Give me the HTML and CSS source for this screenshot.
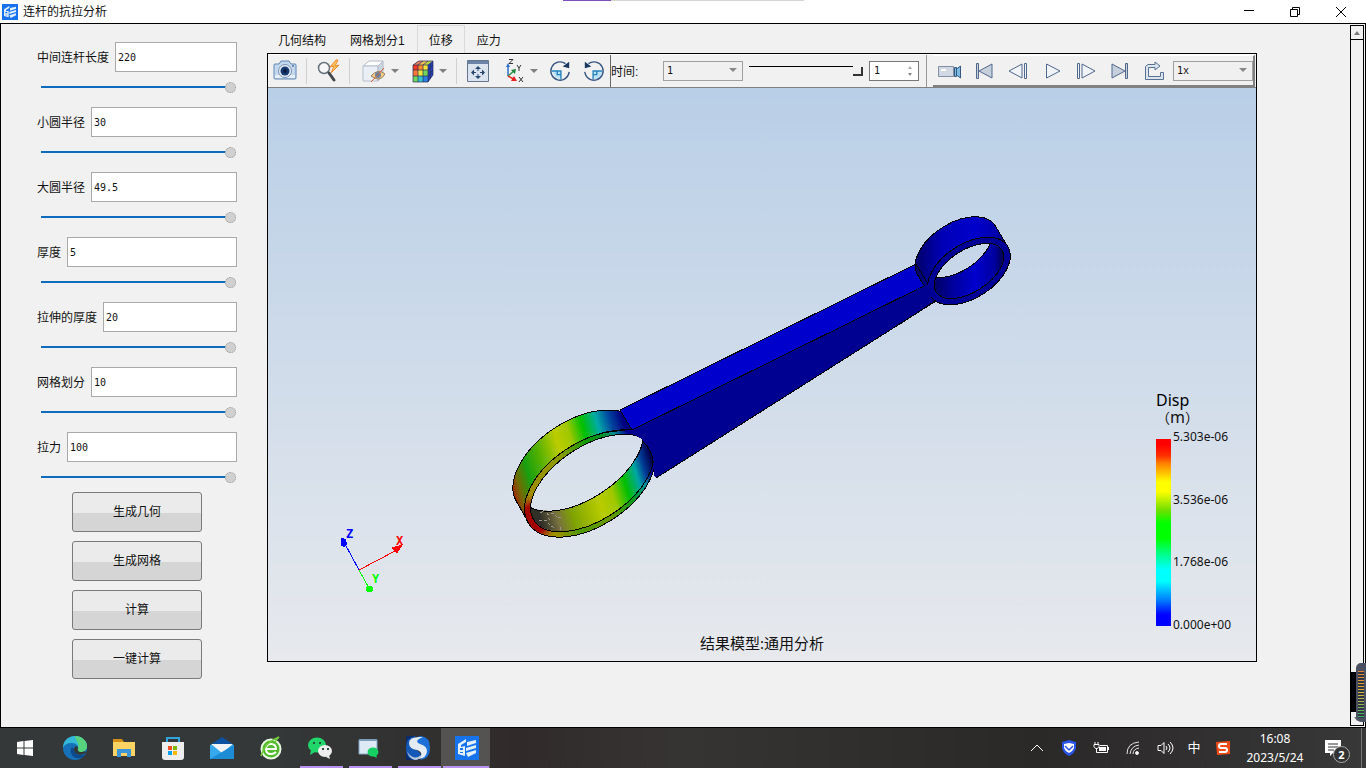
FILE: index.html
```html
<!DOCTYPE html>
<html lang="zh-CN">
<head>
<meta charset="utf-8">
<title>连杆的抗拉分析</title>
<link rel="stylesheet" href="styles.css">
</head>
<body>
<header class="titlebar">
  <svg class="app-icon" viewBox="0 0 24 24"><use href="#logo"/></svg>
  <h1 class="title">连杆的抗拉分析</h1>
  <div class="top-strip"></div>
  <div class="window-buttons">
    <button aria-label="最小化"><svg width="12" height="12" viewBox="0 0 12 12"><path d="M1 4.500h10" stroke="#000"/></svg></button>
    <button aria-label="还原"><svg width="12" height="12" viewBox="0 0 12 12" fill="none" stroke="#000"><path d="M1.500 3.500h7v7h-7zM3.500 3.500v-2h7v7h-2"/></svg></button>
    <button aria-label="关闭"><svg width="12" height="12" viewBox="0 0 12 12"><path d="M1 1l10 10M11 1L1 11" stroke="#000"/></svg></button>
  </div>
</header>

<main class="workspace">
  <form class="params">
    <div class="field"><div class="row"><label for="p1">中间连杆长度</label><input class="value" id="p1" value="220"></div><input class="range" type="range" value="100" aria-label="中间连杆长度"></div>
    <div class="field"><div class="row"><label for="p2">小圆半径</label><input class="value" id="p2" value="30"></div><input class="range" type="range" value="100" aria-label="小圆半径"></div>
    <div class="field"><div class="row"><label for="p3">大圆半径</label><input class="value" id="p3" value="49.5"></div><input class="range" type="range" value="100" aria-label="大圆半径"></div>
    <div class="field"><div class="row"><label for="p4">厚度</label><input class="value" id="p4" value="5"></div><input class="range" type="range" value="100" aria-label="厚度"></div>
    <div class="field"><div class="row"><label for="p5">拉伸的厚度</label><input class="value" id="p5" value="20"></div><input class="range" type="range" value="100" aria-label="拉伸的厚度"></div>
    <div class="field"><div class="row"><label for="p6">网格划分</label><input class="value" id="p6" value="10"></div><input class="range" type="range" value="100" aria-label="网格划分"></div>
    <div class="field"><div class="row"><label for="p7">拉力</label><input class="value" id="p7" value="100"></div><input class="range" type="range" value="100" aria-label="拉力"></div>
    <div class="actions">
      <button type="button">生成几何</button>
      <button type="button">生成网格</button>
      <button type="button">计算</button>
      <button type="button">一键计算</button>
    </div>
  </form>

  <section class="viewer">
    <nav class="tabs">
      <button>几何结构</button><button>网格划分1</button><button class="selected">位移</button><button>应力</button>
    </nav>
    <div class="frame">
      <div class="toolbar">
        <div class="tools">
          <button class="tool" aria-label="截图"><svg width="24" height="24" viewBox="0 0 24 24"><path d="M2 5h4l2-3h8l2 3h4q1 0 1 1v13q0 1-1 1H2q-1 0-1-1V6q0-1 1-1z" fill="#c3d8ee" stroke="#5f86b4"/><path d="M2 16h20v3H2z" fill="#e6eff8"/><circle cx="12" cy="12" r="6.500" fill="#e4edf7" stroke="#7b93b2"/><circle cx="12" cy="12" r="4.500" fill="#173a70"/><circle cx="12" cy="12" r="2" fill="#0a1d42"/><path d="M19 7h2" stroke="#23416f"/></svg></button>
          <i class="sep"></i>
          <button class="tool" aria-label="查询"><svg width="26" height="24" viewBox="0 0 26 24"><circle cx="9" cy="9" r="5.500" fill="#f7f7f7" stroke="#68717a" stroke-width="1.500"/><path d="M14 14l5 7" stroke="#44484c" stroke-width="3" stroke-linecap="round"/><path d="M21 1l-6 7 4-1-3 7 8-8-4 1 3-6z" fill="#ffc860" stroke="#f0882e"/></svg></button>
          <i class="sep"></i>
          <button class="tool end" aria-label="显示隐藏"><svg width="26" height="24" viewBox="0 0 24 24"><path d="M1 7l6-5h14l-5 5z" fill="#fff" stroke="#b4bcc8"/><path d="M1 7h15v15H1z" fill="#eaeff5" stroke="#b8c0cc"/><path d="M16 7l5-5v14l-5 6z" fill="#cdd5e0" stroke="#b4bcc8"/><path d="M9 17q7-8 14-2-5 9-14 2z" fill="#f6d088" stroke="#98805c"/><circle cx="16" cy="16" r="3" fill="#6c80a0"/><path d="M9 23L22 9" stroke="#d06038"/></svg></button><button class="caret" aria-label="更多显示"></button>
          <button class="tool end" aria-label="云图"><svg width="24" height="24" viewBox="0 0 24 24"><path d="M2 6l6-4h14l-5 4z" fill="#b8d848"/><path d="M7 2h5l-4 4H2z" fill="#e88060"/><path d="M12 2h5l-4 4H8z" fill="#f3c454"/><path d="M2 6h5v5H2z" fill="#f03920"/><path d="M7 6h5v5H7z" fill="#f88c28"/><path d="M12 6h5v5h-5z" fill="#f9e43a"/><path d="M2 11h5v6H2z" fill="#ff7838"/><path d="M7 11h5v6H7z" fill="#f0e339"/><path d="M12 11h5v6h-5zM2 17h5v6H2z" fill="#71d65b"/><path d="M7 17h5v6H7z" fill="#36c4ce"/><path d="M12 17h5v6h-5z" fill="#2c80e0"/><path d="M17 6l5-4v14l-5 7z" fill="#2440b8"/><path d="M2 6h15v17H2zM7 6v17M12 6v17M2 11h15l5-5M2 17h15l5-6M17 6l5-4v14l-5 7M2 6l6-4h14M7 6l5-4M12 6l5-4M19.500 4v15" fill="none" stroke="#282f5a" stroke-width=".7"/></svg></button><button class="caret" aria-label="更多云图"></button>
          <i class="sep"></i>
          <button class="tool" aria-label="适应窗口"><svg width="24" height="24" viewBox="0 0 24 24"><path d="M1.500 1.500h21v21h-21z" fill="#dbe4ee" stroke="#64758e"/><path d="M2 2h20v3H2z" fill="#6c83a6"/><path d="M12 7l3 3H9zM12 20l3-3H9zM5 13.500l3-3v6zM19 13.500l-3-3v6z" fill="#29466f"/><path d="M12 9v3M12 15v3M7 13.500h3M14 13.500h3" stroke="#29466f"/></svg></button>
          <button class="tool end" aria-label="视角"><svg width="24" height="24" viewBox="0 0 24 24" fill="none"><path d="M6 17V8" stroke="#2872c8" stroke-width="1.500"/><path d="M4 8l2-4 2 4z" fill="#2872c8"/><path d="M6 17l6-5" stroke="#32934b" stroke-width="1.500"/><path d="M14 10l-1 5-4-4z" fill="#188838"/><path d="M6 17l7 4" stroke="#e03020" stroke-width="1.500"/><path d="M15 22h-6l3-5z" fill="#e82020"/><path d="M7 .5h4l-4 4h4M15 6l2 3 2-3M17 9v3M17 18l4 5M21 18l-4 5" stroke="#333"/></svg></button><button class="caret" aria-label="更多视角"></button>
          <button class="tool rotate" aria-label="顺时针旋转"><svg width="22" height="22" viewBox="0 0 24 24"><path d="M4 12h9v8q-7 1-9-8z" fill="#b9e3f6"/><path d="M3 12h10v9M9 12v4h4" fill="none" stroke="#2583bd" stroke-width="1.500"/><path d="M18 4A10 10 0 1 0 22 13" fill="none" stroke="#365580" stroke-width="1.500"/><path d="M15 7l7-5v7z" fill="#183861"/></svg></button>
          <button class="tool rotate" aria-label="逆时针旋转"><svg width="22" height="22" viewBox="0 0 24 24"><path d="M12 12h9q-1 9-9 9z" fill="#b9e3f6"/><path d="M21 12h-10v9M15 12v4h-4" fill="none" stroke="#2583bd" stroke-width="1.500"/><path d="M6 4A10 10 0 1 1 2 13" fill="none" stroke="#365580" stroke-width="1.500"/><path d="M9 7L2 2v7z" fill="#183861"/></svg></button>
        </div>
        <div class="time">
          <label for="step">时间:</label>
          <span class="combo"><select id="step"><option>1</option></select></span>
          <input class="time-range" type="range" value="100" aria-label="时间">
          <span class="spin"><input type="text" value="1" aria-label="帧"><span class="spin-arrows"></span></span>
        </div>
        <div class="player">
          <button aria-label="录制"><svg width="24" height="20" viewBox="0 0 24 20"><path d="M.5 5.500h15v10H.5z" fill="#d0d8e4" stroke="#8390a3"/><path d="M3 8h5v2H3z" fill="#fff"/><path d="M16.500 6.500h2v9h-2zM18.500 8l4-3v12l-4-3z" fill="#7bbbe5" stroke="#34587f"/></svg></button>
          <button aria-label="首帧"><svg width="20" height="20" viewBox="0 0 20 20" fill="#c6cfdb" stroke="#51688f"><path d="M2.500 2.500h2v15h-2zM18 3v14L5 10z"/></svg></button>
          <button aria-label="上一帧"><svg width="20" height="20" viewBox="0 0 20 20" fill="#f0f4f9" stroke="#51688f"><path d="M14 3v14L1 10zM16.500 2.500h2v15h-2z"/></svg></button>
          <button aria-label="播放"><svg width="20" height="20" viewBox="0 0 20 20" fill="#f0f4f9" stroke="#51688f"><path d="M4.500 3v14L18 10z"/></svg></button>
          <button aria-label="下一帧"><svg width="20" height="20" viewBox="0 0 20 20" fill="#f0f4f9" stroke="#51688f"><path d="M6 3v14l13-7zM1.500 2.500h2v15h-2z"/></svg></button>
          <button aria-label="末帧"><svg width="20" height="20" viewBox="0 0 20 20" fill="#c6cfdb" stroke="#51688f"><path d="M2 3v14l13-7zM15.500 2.500h2v15h-2z"/></svg></button>
          <button aria-label="循环"><svg width="20" height="20" viewBox="0 0 20 20"><path d="M4 3.500h7V1l5 4-5 4V6.500H4.500v9h12v-4h3v7h-18v-13z" fill="#dce5ee" stroke="#587194"/></svg></button>
          <span class="combo speed"><select aria-label="速度"><option>1x</option></select></span>
        </div>
      </div>
      <div class="viewport">
        <svg class="scene" viewBox="268 88 988 573">
          <defs>
            <linearGradient id="outer" gradientUnits="userSpaceOnUse" x1="512" y1="490" x2="633" y2="455"><stop offset="0" stop-color="#a02800"/><stop offset=".06" stop-color="#756800"/><stop offset=".16" stop-color="#18a010"/><stop offset=".28" stop-color="#52b000"/><stop offset=".45" stop-color="#bccc00"/><stop offset=".56" stop-color="#a0c800"/><stop offset=".68" stop-color="#00c000"/><stop offset=".8" stop-color="#00aaa8"/><stop offset=".9" stop-color="#0048a0"/><stop offset="1" stop-color="#000080"/></linearGradient>
            <linearGradient id="wall" gradientUnits="userSpaceOnUse" x1="535" y1="500" x2="653" y2="465"><stop offset="0" stop-color="#303028"/><stop offset=".13" stop-color="#777040"/><stop offset=".26" stop-color="#80a400"/><stop offset=".5" stop-color="#b8cc00"/><stop offset=".62" stop-color="#a0c800"/><stop offset=".74" stop-color="#00be00"/><stop offset=".85" stop-color="#00a6a4"/><stop offset=".92" stop-color="#003e98"/><stop offset="1" stop-color="#000050"/></linearGradient>
            <linearGradient id="face" gradientUnits="userSpaceOnUse" x1="525" y1="490" x2="650" y2="440"><stop offset="0" stop-color="#a08b00"/><stop offset=".35" stop-color="#889c00"/><stop offset=".55" stop-color="#149900"/><stop offset=".68" stop-color="#008f25"/><stop offset=".77" stop-color="#008c90"/><stop offset=".87" stop-color="#000098"/></linearGradient>
            <linearGradient id="faceLow" gradientUnits="userSpaceOnUse" x1="556" y1="534" x2="655" y2="478"><stop offset="0" stop-color="#a09000"/><stop offset=".2" stop-color="#4c9800"/><stop offset=".5" stop-color="#6c9c00"/><stop offset=".75" stop-color="#009820"/><stop offset=".9" stop-color="#0090a0"/><stop offset="1" stop-color="#000098"/></linearGradient>
            <radialGradient id="hot" gradientUnits="userSpaceOnUse" cx="533" cy="520" r="28"><stop offset="0" stop-color="#a00000"/><stop offset=".5" stop-color="#a80800"/><stop offset=".9" stop-color="#a09000" stop-opacity=".6"/><stop offset="1" stop-color="#a09000" stop-opacity="0"/></radialGradient>
            <linearGradient id="blueOuter"><stop offset="0" stop-color="#000068"/><stop offset=".3" stop-color="#0000b8"/><stop offset=".65" stop-color="#0000cc"/><stop offset=".88" stop-color="#0000ac"/><stop offset="1" stop-color="#000058"/></linearGradient>
            <linearGradient id="blueWall"><stop offset="0" stop-color="#000058"/><stop offset=".35" stop-color="#0000a8"/><stop offset=".6" stop-color="#0000cc"/><stop offset=".85" stop-color="#0000a0"/><stop offset="1" stop-color="#000038"/></linearGradient>
            <clipPath id="bigFront"><ellipse cx="592" cy="483" rx="69" ry="37" transform="rotate(-33 592 483)"/></clipPath>
            <clipPath id="smallFront"><ellipse cx="969" cy="271" rx="39" ry="21" transform="rotate(-33 969 271)"/></clipPath>
            <mask id="bigHole" maskUnits="userSpaceOnUse" x="500" y="390" width="180" height="160"><path d="M500 390h180v160H500z" fill="#fff"/><ellipse cx="581" cy="462" rx="70" ry="37" transform="rotate(-33 581 462)" fill="#000"/></mask>
            <mask id="smallHole" maskUnits="userSpaceOnUse" x="900" y="200" width="130" height="120"><path d="M900 200h130v120H900z" fill="#fff"/><ellipse cx="957" cy="250" rx="39" ry="21" transform="rotate(-33 957 250)" fill="#000"/></mask>
            <mask id="ring" maskUnits="userSpaceOnUse" x="500" y="390" width="180" height="160"><ellipse cx="590" cy="484" rx="73" ry="42" transform="rotate(-33 590 484)" fill="#fff"/><ellipse cx="592" cy="483" rx="69" ry="37" transform="rotate(-33 592 483)" fill="#000"/></mask>
          </defs>
          <g stroke="#000" shape-rendering="crispEdges">
            <path d="M528.400 522.300L516.400 501.300A72.500 42 -33 0 1 639.600 424.700L651.600 445.700A72.500 42 -33 0 0 528.400 522.300z" fill="url(#outer)"/>
            <g clip-path="url(#bigFront)">
              <path d="M500 390h180v160H500z" fill="url(#wall)" stroke="none" mask="url(#bigHole)"/>
              <path d="M540 513l6-3 2 5 6-2 3 5 5-1M539 520l8 1 3 5 6 2M548 518l4 4M560 527v4" fill="none" stroke="#99948c" stroke-dasharray="3 2"/>
              <ellipse cx="581" cy="462" rx="70" ry="37" transform="rotate(-33 581 462)" fill="none"/>
            </g>
            <g stroke="none" mask="url(#ring)">
              <path d="M500 390h180v160H500z" fill="url(#face)"/>
              <path d="M550 515L655 455V545H550z" fill="url(#faceLow)"/>
              <circle cx="533" cy="520" r="28" fill="url(#hot)"/>
            </g>
            <g fill="none">
              <ellipse cx="590" cy="484" rx="73" ry="42" transform="rotate(-33 590 484)"/>
              <ellipse cx="592" cy="483" rx="69" ry="37" transform="rotate(-33 592 483)"/>
            </g>
            <path d="M620 410L916 264 928 284 632 430z" fill="#0000cc"/>
            <path d="M632 430L928 284 940 298 657 478 654 476Q656 460 648 446 642 436 624 431z" fill="#000091" stroke="none"/>
            <path d="M656 478L936 301M632 430L928 284M602 433Q618 429 632 430M643 442Q653 450 653 464" fill="none"/>
            <path d="M930 295L917 274A46 27 -33 0 1 996 227L1008 247A46 27 -33 0 0 930 295z" fill="url(#blueOuter)"/>
            <path d="M916 264L928 284"/>
            <g clip-path="url(#smallFront)">
              <path d="M930 238h76v66h-76z" fill="url(#blueWall)" stroke="none" mask="url(#smallHole)"/>
              <ellipse cx="957" cy="250" rx="39" ry="21" transform="rotate(-33 957 250)" fill="none"/>
            </g>
            <g fill="none" transform="rotate(-33 969 271)">
              <ellipse cx="969" cy="271" rx="42.500" ry="24" stroke="#000096" stroke-width="6"/>
              <ellipse cx="969" cy="271" rx="46" ry="27"/><ellipse cx="969" cy="271" rx="39" ry="21"/>
            </g>
            <path d="M916 290L927.500 285 932 300 916 311z" fill="#000091" stroke="none"/>
            <path d="M900 324L935 301" fill="none"/>
          </g>
          <g fill="none" shape-rendering="crispEdges">
            <path d="M359 570l-14-26" stroke="#00f"/><path d="M341 538l5 1 1 5-3 3-3-1z" fill="#00f"/>
            <path d="M359 570l38-20" stroke="red"/><path d="M392 548l10-3-5 8z" fill="red" stroke="red"/>
            <path d="M359 570l10 18" stroke="#0f0"/><circle cx="369.500" cy="589" r="3.500" fill="#0f0"/>
          </g>
          <g class="axis-label"><text x="346" y="538" fill="#00f">Z</text><text x="396" y="545" fill="red">X</text><text x="372" y="583" fill="#0f0">Y</text></g>
        </svg>
        <div class="legend">
          <div class="legend-title">Disp</div>
          <div class="legend-unit">（<span>m</span>）</div>
          <div class="legend-body"><div class="scale"></div><div class="ticks"><span>5.303e-06</span><span>3.536e-06</span><span>1.768e-06</span><span>0.000e+00</span></div></div>
        </div>
        <div class="caption">结果模型:通用分析</div>
      </div>
    </div>
  </section>

  <div class="scrollbar">
    <button class="up" aria-label="向上滚动"></button>
    <button class="down" aria-label="向下滚动"></button>
    <div class="meter"></div>
  </div>
</main>

<footer class="taskbar">
  <div class="apps">
    <button aria-label="开始"><svg width="16" height="16" viewBox="0 0 16 16" fill="#fff"><path d="M0 2l6.500-1v6.500H0zM7.500 1L16 0v7.500H7.500zM0 8.500h6.500V15L0 14zM7.500 8.500H16V16l-8.500-1z"/></svg></button>
    <button aria-label="Edge"><svg width="24" height="24" viewBox="0 0 24 24"><circle cx="12" cy="12" r="12" fill="#1671b8"/><path d="M0 12C0 4 6 0 12 0c7 0 12 5 12 10 0 4-3 6-6 6-4 0-4-1-3-3 1-3-2-6-6-6-5 0-8 2-9 5z" fill="#35b8d8"/><path d="M12 0c7 0 12 5 12 10 0 4-3 6-6 6-4 0-4-1-3-3 2-6-3-9-3-13z" fill="#57d27d"/><path d="M9 11c-4 5 1 13 9 11 2-1 3-2 5-4-6 3-12 0-12-5z" fill="#0c4a8c"/><path d="M11 13c0 4 4 7 10 5l2-1-1-2c-6 3-8-1-7-3 0-3-4-2-4 1z" fill="#333637"/></svg></button>
    <button aria-label="文件"><svg width="22" height="20" viewBox="0 0 22 20"><path d="M0 1h9l2 3H0z" fill="#d48f18"/><path d="M0 4h22v14H0z" fill="#ffd264"/><path d="M4 19v-8h14v8h-4v-4H8v4z" fill="#3a96d8"/></svg></button>
    <button aria-label="商店"><svg width="24" height="24" viewBox="0 0 24 24"><path d="M6 7V2h12v5" fill="none" stroke="#2fa5df" stroke-width="2"/><path d="M1 6h22v15q0 3-3 3H4q-3 0-3-3z" fill="#eee"/><path d="M7 10h4v4H7z" fill="#f05023"/><path d="M12 10h4v4h-4z" fill="#7eb900"/><path d="M7 15h4v4H7z" fill="#00a3ee"/><path d="M12 15h4v4h-4z" fill="#ffb800"/></svg></button>
    <button aria-label="邮件"><svg width="24" height="22" viewBox="0 0 24 22"><path d="M0 8l12-8 12 8z" fill="#0d52a0"/><path d="M0 8h24v14H0z" fill="#35a9ec"/><path d="M1 7h22L12 16z" fill="#f1f4f7"/><path d="M0 22L24 8v14z" fill="#1d8bd6"/></svg></button>
    <button aria-label="浏览器"><svg width="24" height="24" viewBox="0 0 24 24"><circle cx="12" cy="13" r="9.500" fill="#52b92c" stroke="#e6f8df" stroke-width="2"/><path d="M7 13h10q0-5-5-5t-5 5q0 5 5 5 3 0 5-2" fill="none" stroke="#fff" stroke-width="2"/><path d="M2 20Q6 6 20 1q-3 3-4 5" fill="none" stroke="#70cc38" stroke-width="1.500"/></svg></button>
    <button class="open" aria-label="微信"><svg width="24" height="22" viewBox="0 0 24 22"><ellipse cx="9" cy="8" rx="9" ry="7.500" fill="#20d56a"/><path d="M3 13l-1 5 5-3z" fill="#20d56a"/><ellipse cx="17" cy="14" rx="7" ry="6" fill="#eee"/><path d="M21 18l1 4-4-2z" fill="#eee"/><path d="M5 6h2M11 6h2M14 12h2M19 12h2" stroke="#28513a" stroke-width="2"/></svg></button>
    <button class="open" aria-label="微信窗口"><svg width="22" height="20" viewBox="0 0 22 20"><path d="M1 2h18v14H1z" fill="#ddeaf5" stroke="#83a5c4"/><path d="M1 1h18v2H1z" fill="#7d9dbb"/><ellipse cx="15" cy="14" rx="5.500" ry="4.500" fill="#16cf62"/><path d="M18 17l1 3-4-2z" fill="#16cf62"/></svg></button>
    <button class="open" aria-label="仿真平台"><svg width="24" height="24" viewBox="0 0 24 24"><path d="M0 0h10Q0 4 0 12t9 12H0z" fill="#0b2c68"/><path d="M10 0Q0 1 0 12t9 12q8-1 5-7-2-3-7-5-5-5 3-12z" fill="#1458b8"/><path d="M14 24q10-1 10-12T15 0q-8 1-5 7 2 3 7 5 5 5-3 12z" fill="#1d70d8"/><path d="M17 1Q3 0 3 7q0 6 8 7 8 3 1 9 9-1 9-8 0-5-7-7-7-3 3-7z" fill="#e4ebf3"/><path d="M1 15q4 8 11 6l3-2q-1 5-6 5-6-1-8-9z" fill="#b3c6da"/></svg></button>
    <button class="open current" aria-label="连杆的抗拉分析"><svg width="24" height="24" viewBox="0 0 24 24"><g id="logo"><path d="M0 0h24v24H0z" fill="#1673ec"/><path d="M3 8l8-5v3L6 9v2l4-1v10l-7-2zM5 12v2h3v-2zM5 16v1h3v-1zM12 6l9-2v3l-9 3zM11 12l10-3v3l-10 3zM11 17l10-3v3l-8 4z" fill="#e2effc" fill-rule="evenodd"/></g></svg></button>
  </div>
  <div class="tray">
    <button aria-label="显示隐藏的图标"><svg width="14" height="10" viewBox="0 0 14 10"><path d="M1 8l6-6 6 6" fill="none" stroke="#fff"/></svg></button>
    <button aria-label="安全"><svg width="16" height="16" viewBox="0 0 16 16"><path d="M8 0l7 2v6q-1 5-7 8Q2 13 1 8V2z" fill="#2953e6"/><path d="M3 4l5-1 5 1v4q-1 3-5 5-4-2-5-5z" fill="#fff"/><path d="M4 6l4 4 4-4" fill="none" stroke="#2953e6" stroke-width="1.500"/></svg></button>
    <button aria-label="电池"><svg width="16" height="14" viewBox="0 0 16 14" fill="none" stroke="#fff"><path d="M2 1v2M5 1v2M1 3.500h5v2l-1.500 2h-2L1 5.500zM3.500 7v4.500h11v-7H7M15.500 6v3"/><path d="M6 6h7v4H6z" fill="#fff" stroke="none"/></svg></button>
    <button aria-label="网络"><svg width="14" height="14" viewBox="0 0 14 14" fill="none" stroke="#e5e5e5"><path d="M1 13Q1 2 13 1M4 13Q5 5 13 4M7 13Q7 8 13 7"/><circle cx="11" cy="12" r="1.500" fill="#fff"/></svg></button>
    <button aria-label="音量"><svg width="17" height="14" viewBox="0 0 17 14" fill="none" stroke="#fff"><path d="M1 4.500h3l3-3v11l-3-3H1zM9 5q2 2 0 4M11 3q4 4 0 8M13 1q6 6 0 12"/></svg></button>
    <button class="ime">中</button>
    <button aria-label="搜狗输入法"><svg width="16" height="16" viewBox="0 0 16 16"><path d="M1 2l14-1v13l-13 1z" fill="#f04b16"/><path d="M12 4H6q-2 0-2 2t2 2h4q2 0 2 2t-2 2H4" fill="none" stroke="#fff" stroke-width="2"/></svg></button>
    <time class="clock">16:08<br>2023/5/24</time>
    <button class="notices" aria-label="通知"><svg width="17" height="16" viewBox="0 0 17 16"><path d="M0 0h16v13H8l-3 3v-3H0z" fill="#fff"/><path d="M3 4h10M3 7h10M3 10h6" stroke="#333"/></svg><span class="badge">2</span></button>
  </div>
</footer>
</body>
</html>
```
FILE: styles.css
```css
* { box-sizing: border-box; }

body {
  margin: 0;
  height: 100vh;
  display: flex;
  flex-direction: column;
  background: #fff;
  color: #111;
  font: 12px/16px "Liberation Sans", "Noto Sans CJK SC", sans-serif;
}

button, input, select { font: inherit; color: inherit; margin: 0; padding: 0; }
button { border: 0; background: none; }
svg { display: block; flex: none; }

/* Title bar */
.titlebar { position: relative; height: 23px; flex: none; display: flex; align-items: center; padding-left: 2px; }
.app-icon { width: 16px; height: 16px; }
.title { flex: 1; margin: 0 0 0 5px; font-size: 12px; font-weight: 400; }
.top-strip { position: absolute; top: 0; left: 41.2%; width: 241px; height: 1px; background: linear-gradient(90deg, #7d4fb8 48px, #d5d5d5 48px); }
.window-buttons { display: flex; padding-right: 2px; }
.window-buttons button { width: 46px; height: 22px; display: grid; place-items: center; }

/* Work area */
.workspace { flex: 1; min-height: 0; display: flex; border: 1px solid #000; background: #f1f1f1; }
.params { width: 236px; flex: none; padding: 18px 0 0 36px; }
.field { height: 65px; }
.row { display: flex; align-items: center; gap: 6px; height: 30px; }
.row label { flex: none; padding-top: 2px; }
.value {
  flex: 1;
  min-width: 0;
  height: 30px;
  padding: 0 2px;
  border: 1px solid #a9a9a9;
  background: #fff;
  font-family: "DejaVu Sans Mono", monospace;
  font-size: 10px;
}
.range { display: block; appearance: none; width: 195px; height: 12px; margin: 9px 0 0 4px; background: linear-gradient(#0f6cbd, #0f6cbd) 0 5px / 190px 2px no-repeat; }
.range::-webkit-slider-thumb { appearance: none; width: 11px; height: 11px; border: 1px dotted #999; border-radius: 50%; background: #d0d0d0; }
.actions { display: flex; flex-direction: column; align-items: center; gap: 9px; margin-top: -5px; }
.actions button { width: 130px; height: 40px; border: 1px solid #7a7a7a; border-radius: 3px; background: linear-gradient(#ebebeb 52%, #d5d5d5 52%); }

/* Result viewer */
.viewer { flex: 1; min-width: 0; display: flex; flex-direction: column; margin: 1px 92px 65px 30px; }
.tabs { display: flex; height: 28px; }
.tabs button { padding: 2px 11px 0 10px; border: 1px solid transparent; border-bottom: 0; }
.tabs button + button { padding-left: 11px; }
.tabs .selected { border-color: #d9d9d9; }
.frame { flex: 1; min-height: 0; display: flex; flex-direction: column; border: 1px solid #000; }
.toolbar { display: flex; flex: none; height: 34px; border-top: 1px solid #fff; border-bottom: 1px solid #808080; }
.tools { display: flex; align-items: center; width: 343px; flex: none; padding-left: 1px; border-right: 1px solid #666; }
.tool { width: 32px; height: 32px; flex: none; display: grid; place-items: center; }
.tool.end { justify-items: end; }
.tool.rotate { margin-left: 2px; }
.sep { width: 1px; height: 26px; margin: 0 5px; background: #d0d0d0; flex: none; }
.caret { width: 16px; height: 30px; flex: none; display: grid; place-items: center; }
.caret::before { content: ""; border: 4px solid transparent; border-top-color: #808080; border-bottom: 0; }
.time { display: flex; align-items: center; flex: 1; max-width: 316px; border-right: 1px solid #999; }
.time label { width: 52px; flex: none; padding-top: 2px; }
.combo { position: relative; width: 80px; height: 20px; flex: none; }
.combo select { appearance: none; width: 100%; height: 20px; padding: 0 3px; border: 1px solid #a0a0a0; border-radius: 0; background: #f0f0f0; font-family: "DejaVu Sans Mono", monospace; font-size: 10px; opacity: 1; }
.combo::after { content: ""; position: absolute; right: 6px; top: 7px; border: 4px solid transparent; border-top-color: #888; border-bottom: 0; }
.time-range { appearance: none; flex: 1; min-width: 30px; height: 20px; margin: 0 6px; background: linear-gradient(#000, #000) 0 5px / calc(100% - 10px) 1px no-repeat; }
.time-range::-webkit-slider-thumb { appearance: none; width: 10px; height: 9px; margin-top: 0; border: solid #333; border-width: 0 2px 2px 0; background: #f0f0f0; }
.spin { display: flex; align-items: center; width: 50px; height: 20px; flex: none; margin-right: 7px; border: 1px solid #777; background: #fff; }
.spin input { width: 34px; border: 0; padding: 0 4px; background: none; font-family: "DejaVu Sans Mono", monospace; font-size: 10px; }
.spin-arrows { display: flex; flex-direction: column; gap: 4px; margin-left: 4px; }
.spin-arrows::before, .spin-arrows::after { content: ""; border: 2px solid transparent; }
.spin-arrows::before { border-bottom: 3px solid #aaa; border-top: 0; }
.spin-arrows::after { border-top: 3px solid #888; border-bottom: 0; }
.player { display: flex; align-items: center; margin: 0 1px 0 auto; border: solid; border-width: 1px 2px 2px 0; border-color: #fff #808080 #808080 #fff; }
.player button { width: 34px; height: 28px; display: grid; place-items: center; }
.speed { margin-left: 2px; }

.viewport { position: relative; flex: 1; min-height: 0; background: linear-gradient(#b9cfe7, #e7e9ed); }
.scene { width: 100%; height: 100%; }
.axis-label { font: bold 12px "DejaVu Sans Mono", monospace; }
.legend { position: absolute; right: 16px; bottom: 28px; width: 84px; font-family: "Noto Sans", "Noto Sans CJK SC", sans-serif; white-space: nowrap; }
.legend-title { font-size: 16px; line-height: 18px; color: #000; }
.legend-unit { font-size: 14px; line-height: 18px; margin-bottom: 2px; }
.legend-unit span { font-size: 16px; line-height: 16px; }
.legend-body { display: flex; gap: 2px; }
.scale { width: 15px; height: 187px; margin-top: 10px; background: linear-gradient(#f00 0 3%, #ff3000 9%, #ff8000 13%, #ff0 23% 28%, #70e000 38%, #0f0 45% 53%, #00ff80 61%, #0ff 70% 76%, #0080ff 86%, #00f 94%); }
.ticks { display: flex; flex-direction: column; justify-content: space-between; height: 204px; }
.caption { position: absolute; left: 0; right: 0; bottom: 8px; text-align: center; font: 15px/20px "Noto Sans", "Noto Sans CJK SC", sans-serif; }

/* Scroll bar */
.scrollbar { position: relative; width: 14px; flex: none; margin: 1px 1px; display: flex; flex-direction: column; justify-content: space-between; border: 1px solid #000; }
.scrollbar button { height: 14px; display: grid; place-items: center; }
.up { border-bottom: 1px solid #000; }
.down { border-top: 1px solid #000; }
.up::before, .down::before { content: ""; border: 3px solid transparent; }
.up::before { border-bottom: 4px solid #777; border-top: 0; }
.down::before { border-top: 4px solid #777; border-bottom: 0; }
.meter { position: absolute; right: -3px; bottom: 3px; width: 10px; height: 59px; border: 1px solid #4b5160; border-width: 8px 2px 4px 2px; border-radius: 5px 0 0 5px; background: repeating-linear-gradient(transparent 0 1px, #303642 1px 3px), linear-gradient(#e08030, #d9b840 50%, #30b070); }
.meter::before { content: ""; position: absolute; left: -8px; top: 1px; width: 6px; height: 40px; background: #000; }

/* Task bar */
.taskbar { height: 40px; flex: none; display: flex; justify-content: space-between; background: linear-gradient(90deg, #343838 0 20%, #302b2a 38%, #363433 50%, #2b2828 76%, #383838); color: #fff; }
.apps, .tray { display: flex; }
.apps button { width: 49px; height: 40px; display: grid; place-items: center; }
.apps button:not(:first-child) { padding-left: 2px; }
.apps .open { background: linear-gradient(#b991f0, #b991f0) 100% 100% / 43px 2px no-repeat; }
.apps .current { background: linear-gradient(#b991f0, #b991f0) 50% 100% / 46px 2px no-repeat, #555352; }
.tray { align-items: center; padding-right: 6px; border-right: 1px solid #777; margin-right: 4px; }
.tray button { width: 32px; height: 40px; display: grid; place-items: center; }
.tray .ime { width: 26px; font-size: 13px; }
.clock { width: 72px; text-align: center; font: 12px/19px "Noto Sans", sans-serif; }
.tray .notices { position: relative; width: 44px; }
.badge { position: absolute; left: 22px; top: 18px; width: 17px; height: 17px; border: 1px solid #aaa; border-radius: 50%; background: #333; font: bold 11px/15px "Noto Sans", sans-serif; text-align: center; }
```
